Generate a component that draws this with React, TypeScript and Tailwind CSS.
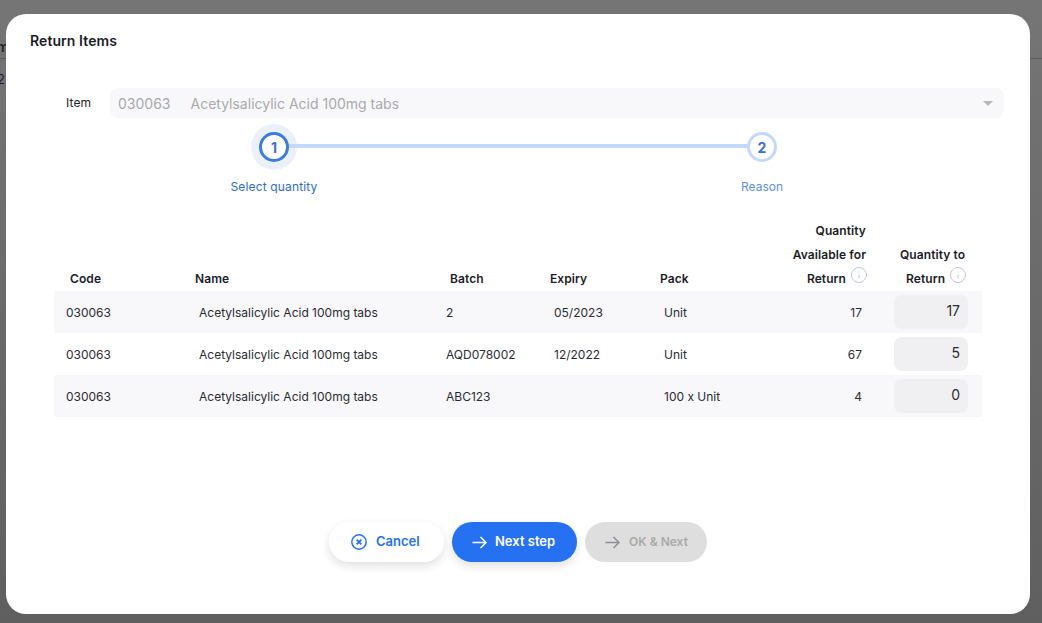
import { Info } from "lucide-react";

const rows = [
  { batch: "2", expiry: "05/2023", pack: "Unit", available: "17", qty: "17", shade: true },
  { batch: "AQD078002", expiry: "12/2022", pack: "Unit", available: "67", qty: "5", shade: false },
  { batch: "ABC123", expiry: "", pack: "100 x Unit", available: "4", qty: "0", shade: true },
];

const cols = "grid grid-cols-[137px_251px_104px_110px_124px_94px_108px]";

function Arrow({ className }: { className: string }) {
  return (
    <svg width="15" height="13" viewBox="0 0 15 13" fill="none" stroke="currentColor" strokeWidth="1.5" className={className}>
      <path d="M0.5 6.5H14M8.5 1L14 6.5L8.5 12" />
    </svg>
  );
}

function Step({ n, label, active }: { n: string; label: string; active?: boolean }) {
  return (
    <div className="flex w-[100px] flex-col items-center">
      <div className={active ? "flex size-[46px] items-center justify-center rounded-full bg-[#ebf1fb]" : "flex size-[46px] items-center justify-center rounded-full"}>
        <div className={active
          ? "relative z-20 flex size-[30px] items-center justify-center rounded-full border-[3px] border-[#3e7bdf] bg-white text-[14px] font-bold text-[#3e6fd0]"
          : "relative z-20 flex size-[30px] items-center justify-center rounded-full border-[3px] border-[#c3d8fb] bg-white text-[14px] font-bold text-[#3e6fd0]"}>
          {n}
        </div>
      </div>
      <div className={active ? "mt-[9px] whitespace-nowrap text-[12px] leading-[16px] tracking-[0.15px] text-[#2f6bd0]" : "mt-[9px] whitespace-nowrap text-[12px] leading-[16px] text-[#5c8fe6]"}>
        {label}
      </div>
    </div>
  );
}

export default function App() {
  return (
    <div className="relative h-[623px] w-[1042px] overflow-hidden bg-gradient-to-b from-[#757575] to-[#5f5f5f] font-['Inter',sans-serif]">
      <div className="absolute left-0 top-[58px] h-px w-full bg-[#5c5c5c]" />
      <div className="absolute left-[-3px] top-[38px] text-[13px] font-semibold text-[#1c1c28]">m</div>
      <div className="absolute left-[-3px] top-[70px] text-[13px] text-[#1c1c28]">2</div>

      <div className="absolute left-[6px] top-[14px] flex h-[600px] w-[1024px] flex-col rounded-[20px] bg-white">
        <div className="pl-[24px] pt-[19px] text-[14px] font-semibold leading-[16px] tracking-[0.08px] text-[#1c1c28]">Return Items</div>

        <div className="ml-[60px] mt-[39px] flex items-center">
          <div className="w-[44px] text-[12px] tracking-[0.1px] text-[#1c1c28]">Item</div>
          <div className="flex h-[30px] w-[894px] items-center justify-between rounded-[8px] bg-[#f8f8fa] pl-[8px] pr-[11px] text-[14px] text-[#a9a9ae]">
            <div className="flex gap-[20px]"><span>030063</span><span>Acetylsalicylic Acid 100mg tabs</span></div>
            <div className="size-0 border-x-[5px] border-t-[5px] border-x-transparent border-t-[#b8b8b8]" />
          </div>
        </div>

        <div className="relative ml-[218px] mt-[6px] flex w-[588px] justify-between">
          <div className="absolute left-[50px] right-[50px] top-[20px] z-10 h-[4px] bg-[#c3d8fb]" />
          <Step n="1" label="Select quantity" active />
          <Step n="2" label="Reason" />
        </div>

        <div className="ml-[48px] mt-[24px] w-[928px]">
          <div className={`${cols} items-end text-[12px] font-semibold leading-[24px] tracking-[0.08px] text-[#1c1c28]`}>
            <div className="pl-[16px]">Code</div>
            <div className="pl-[4px]">Name</div>
            <div className="pl-[8px]">Batch</div>
            <div className="pl-[4px]">Expiry</div>
            <div className="pl-[4px]">Pack</div>
            <div className="pr-[8px] text-right">
              Quantity<br />Available for<br />
              <span className="inline-flex items-center gap-[4px]">Return <Info size={18} strokeWidth={1} className="-mr-[2px] -mt-[9px] text-[#a9b3cf]" /></span>
            </div>
            <div className="pl-[26px]">
              Quantity to<br />
              <span className="ml-[6px] inline-flex items-center gap-[4px]">Return <Info size={18} strokeWidth={1} className="-mt-[9px] text-[#a9b3cf]" /></span>
            </div>
          </div>

          {rows.map((r, i) => (
            <div key={i} className={`${cols} h-[42px] items-center text-[12px] text-[#2b2b35] ${r.shade ? "bg-[#f8f8fa]" : "bg-white"}`}>
              <div className="pl-[12px] pt-[1px]">030063</div>
              <div className="pl-[8px] pt-[1px]">Acetylsalicylic Acid 100mg tabs</div>
              <div className="pl-[4px] pt-[1px]">{r.batch}</div>
              <div className="pl-[8px] pt-[1px]">{r.expiry}</div>
              <div className="pl-[8px] pt-[1px]">{r.pack}</div>
              <div className="pr-[12px] pt-[1px] text-right">{r.available}</div>
              <div className="pl-[20px]">
                <div className="flex h-[34px] w-[74px] items-center justify-end rounded-[8px] bg-[#f0f0f2] pb-[4px] pr-[8px] text-[14px]">{r.qty}</div>
              </div>
            </div>
          ))}
        </div>

        <div className="mt-[105px] flex justify-center gap-[8px] text-[13px] font-semibold">
          <button className="flex h-[40px] w-[115px] items-center gap-[9px] rounded-full bg-white pl-[22px] text-[#2571f1] shadow-[0_4px_10px_rgba(0,0,0,0.12)]">
            <svg width="16" height="16" viewBox="0 0 16 16" fill="none" stroke="currentColor">
              <circle cx="8" cy="8" r="7.2" strokeWidth="1.5" />
              <path d="M5.7 5.7L10.3 10.3M10.3 5.7L5.7 10.3" strokeWidth="1.8" />
            </svg>
            Cancel
          </button>
          <button className="flex h-[40px] w-[125px] items-center gap-[8px] rounded-full bg-[#2571f1] pl-[20px] text-white shadow-[0_4px_10px_rgba(0,0,0,0.12)]">
            <Arrow className="text-white" />Next step
          </button>
          <button className="flex h-[40px] w-[122px] items-center gap-[9px] rounded-full bg-[#dedede] pl-[20px] text-[12px] text-[#a9a9a9]">
            <Arrow className="text-[#8f8f99]" />OK &amp; Next
          </button>
        </div>
      </div>
    </div>
  );
}
